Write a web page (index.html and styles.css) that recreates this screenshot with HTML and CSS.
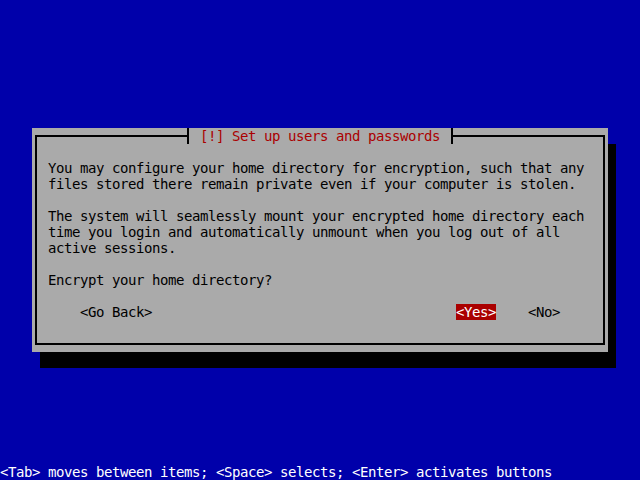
FILE: index.html
```html
<!DOCTYPE html>
<html>
<head>
<meta charset="utf-8">
<link rel="stylesheet" href="styles.css">
</head>
<body>
<div class="screen">
  <div class="dialog">
    <div class="title">[!] Set up users and passwords</div>
    <div class="frame">
      <div class="line">You may configure your home directory for encryption, such that any</div>
      <div class="line">files stored there remain private even if your computer is stolen.</div>
      <div class="line"></div>
      <div class="line">The system will seamlessly mount your encrypted home directory each</div>
      <div class="line">time you login and automatically unmount when you log out of all</div>
      <div class="line">active sessions.</div>
      <div class="line"></div>
      <div class="line">Encrypt your home directory?</div>
      <div class="line"></div>
      <div class="buttons">
        <span class="btn back">&lt;Go Back&gt;</span>
        <span class="btn yes">&lt;Yes&gt;</span>
        <span class="btn no">&lt;No&gt;</span>
      </div>
    </div>
  </div>
  <div class="help">&lt;Tab&gt; moves between items; &lt;Space&gt; selects; &lt;Enter&gt; activates buttons</div>
</div>
</body>
</html>
```
FILE: styles.css
```css
html, body {
  margin: 0;
  padding: 0;
  background: #0000aa;
}
.screen {
  width: 640px;
  height: 480px;
  overflow: hidden;
  display: flex;
  flex-direction: column;
  font-family: "DejaVu Sans Mono", monospace;
  font-size: 14px;
  letter-spacing: -0.428px;
  line-height: 15px;
}
.dialog {
  position: relative;
  margin: 128px 0 0 32px;
  width: 576px;
  height: 224px;
  box-sizing: border-box;
  padding: 7px 3px;
  background: #aaaaaa;
  box-shadow: 8px 16px 0 0 #000000;
  display: flex;
}
.frame {
  flex: 1;
  border: 2px solid #000000;
  padding: 23px 0 0 11px;
  color: #000000;
}
.title {
  position: absolute;
  left: 155px;
  top: 0;
  height: 16px;
  box-sizing: border-box;
  padding: 1px 11px 0;
  background: #aaaaaa;
  border-left: 2px solid #000000;
  border-right: 2px solid #000000;
  color: #aa0000;
  white-space: pre;
}
.line {
  height: 16px;
  box-sizing: border-box;
  padding-top: 1px;
  white-space: pre;
}
.buttons {
  display: flex;
  height: 16px;
}
.btn {
  display: block;
  height: 16px;
  box-sizing: border-box;
  padding-top: 1px;
  white-space: pre;
}
.back {
  margin-left: 32px;
}
.yes {
  margin-left: 304px;
  background: #aa0000;
  color: #ffffff;
}
.no {
  margin-left: 32px;
}
.help {
  margin-top: auto;
  height: 16px;
  box-sizing: border-box;
  padding-top: 1px;
  color: #ffffff;
  white-space: pre;
}
```
